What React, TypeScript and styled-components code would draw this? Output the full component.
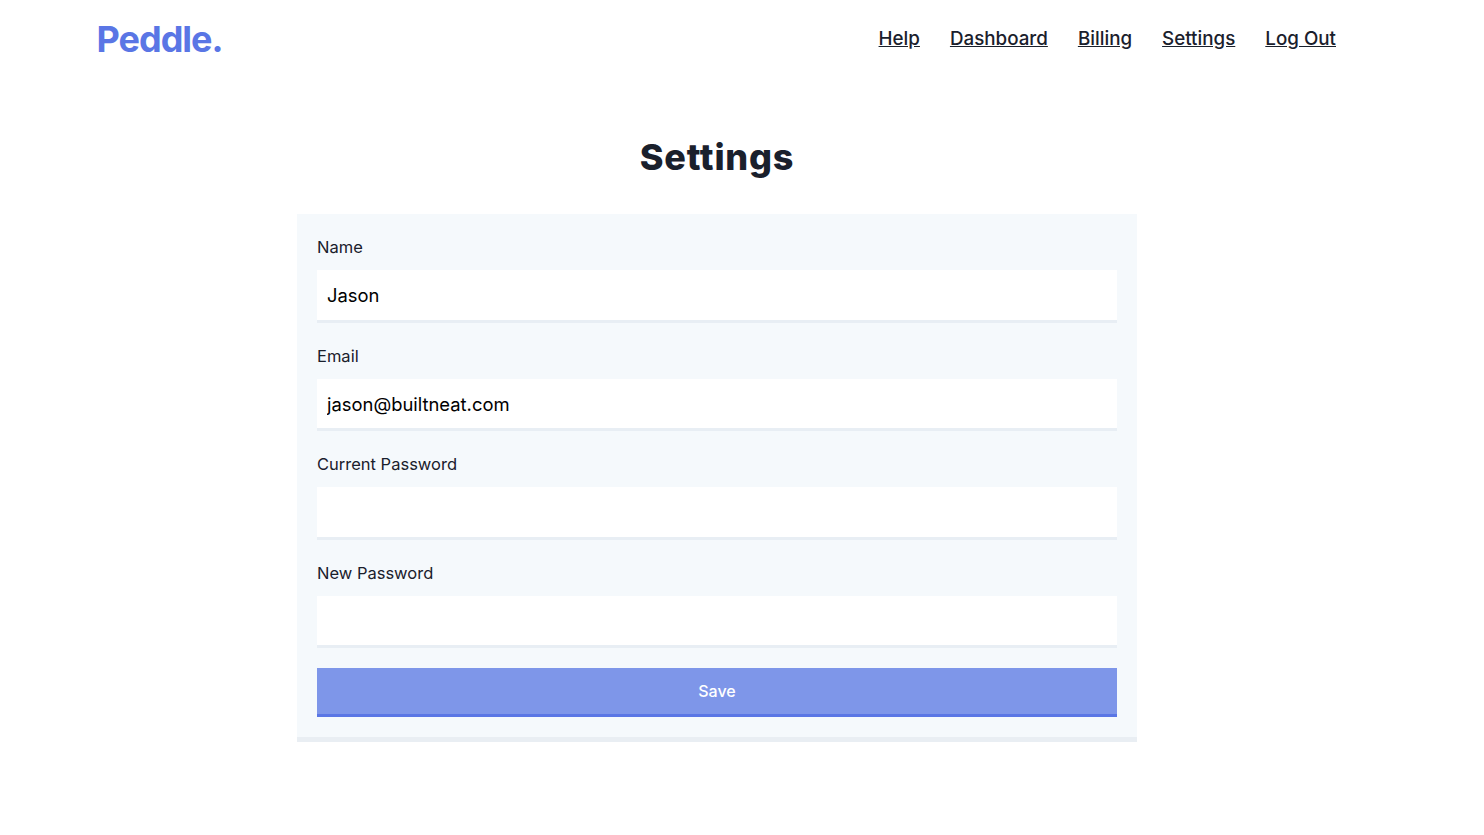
import React from "react"
import styled, { createGlobalStyle } from "styled-components"

const GlobalStyle = createGlobalStyle`
    html, body {
        margin: 0;
        padding: 0;
        background: #fff;
    }

    body {
        font-family: Inter, "Liberation Sans", sans-serif;
        color: #1a202c;
    }

    * {
        box-sizing: border-box;
    }
`

const Page = styled.div`
    width: 1434px;
    min-height: 835px;
`

const Header = styled.header`
    width: 1240px;
    height: 78px;
    margin: 0 auto;
    display: flex;
    align-items: center;
    justify-content: space-between;
`

const Logo = styled.a`
    color: #5a76e5;
    font-size: 36px;
    font-weight: 700;
    letter-spacing: -1px;
    margin-left: -0.5px;
    text-decoration: none;
`

const Nav = styled.nav`
    display: flex;
    gap: 30px;
    padding-right: 1px;
`

const NavLink = styled.a`
    color: #1a202c;
    font-size: 18.8px;
    line-height: 24px;
    margin-top: -1px;
    font-weight: 500;
    text-decoration: underline;
`

const Title = styled.h1`
    margin: 54px 0 32px;
    font-size: 36px;
    line-height: 50px;
    font-weight: 800;
    letter-spacing: 0.8px;
    text-align: center;
`

const Card = styled.form`
    width: 840px;
    margin: 0 auto;
    padding: 20px;
    background: #f5f9fc;
    border-bottom: 5px solid #e9eef3;
    display: flex;
    flex-direction: column;
`

const Label = styled.label`
    display: block;
    height: 26px;
    margin-bottom: 10px;
    font-size: 16.5px;
    line-height: 26px;
`

const Field = styled.div`
    margin-bottom: 20px;
`

const Input = styled.input`
    display: block;
    width: 100%;
    height: 52.6px;
    padding: 0.5px 10px 0;
    background: #fff;
    border: 0;
    border-bottom: 3px solid #e8eef4;
    border-radius: 0;
    outline: none;
    color: #000;
    font-family: Inter, "Liberation Sans", sans-serif;
    font-size: 18.4px;
`

const SaveButton = styled.button`
    display: block;
    width: 100%;
    height: 49px;
    padding: 0;
    background: #7e96e9;
    border: 0;
    border-bottom: 3px solid #5a76e5;
    border-radius: 0;
    color: #fff;
    font-family: Inter, "Liberation Sans", sans-serif;
    font-size: 16px;
    font-weight: 500;
`

const links = ["Help", "Dashboard", "Billing", "Settings", "Log Out"]

const fields = [
    { label: "Name", value: "Jason", type: "text" },
    { label: "Email", value: "jason@builtneat.com", type: "email" },
    { label: "Current Password", value: "", type: "password" },
    { label: "New Password", value: "", type: "password" },
]

const App = () => {
    return <Page>
        <GlobalStyle />
        <Header>
            <Logo href="#">Peddle.</Logo>
            <Nav>
                {links.map(link => <NavLink key={link} href="#">{link}</NavLink>)}
            </Nav>
        </Header>
        <main>
            <Title>Settings</Title>
            <Card onSubmit={e => e.preventDefault()}>
                {fields.map(field => <Field key={field.label}>
                    <Label>{field.label}</Label>
                    <Input type={field.type} defaultValue={field.value} />
                </Field>)}
                <SaveButton type="submit">Save</SaveButton>
            </Card>
        </main>
    </Page>
}

export default App
